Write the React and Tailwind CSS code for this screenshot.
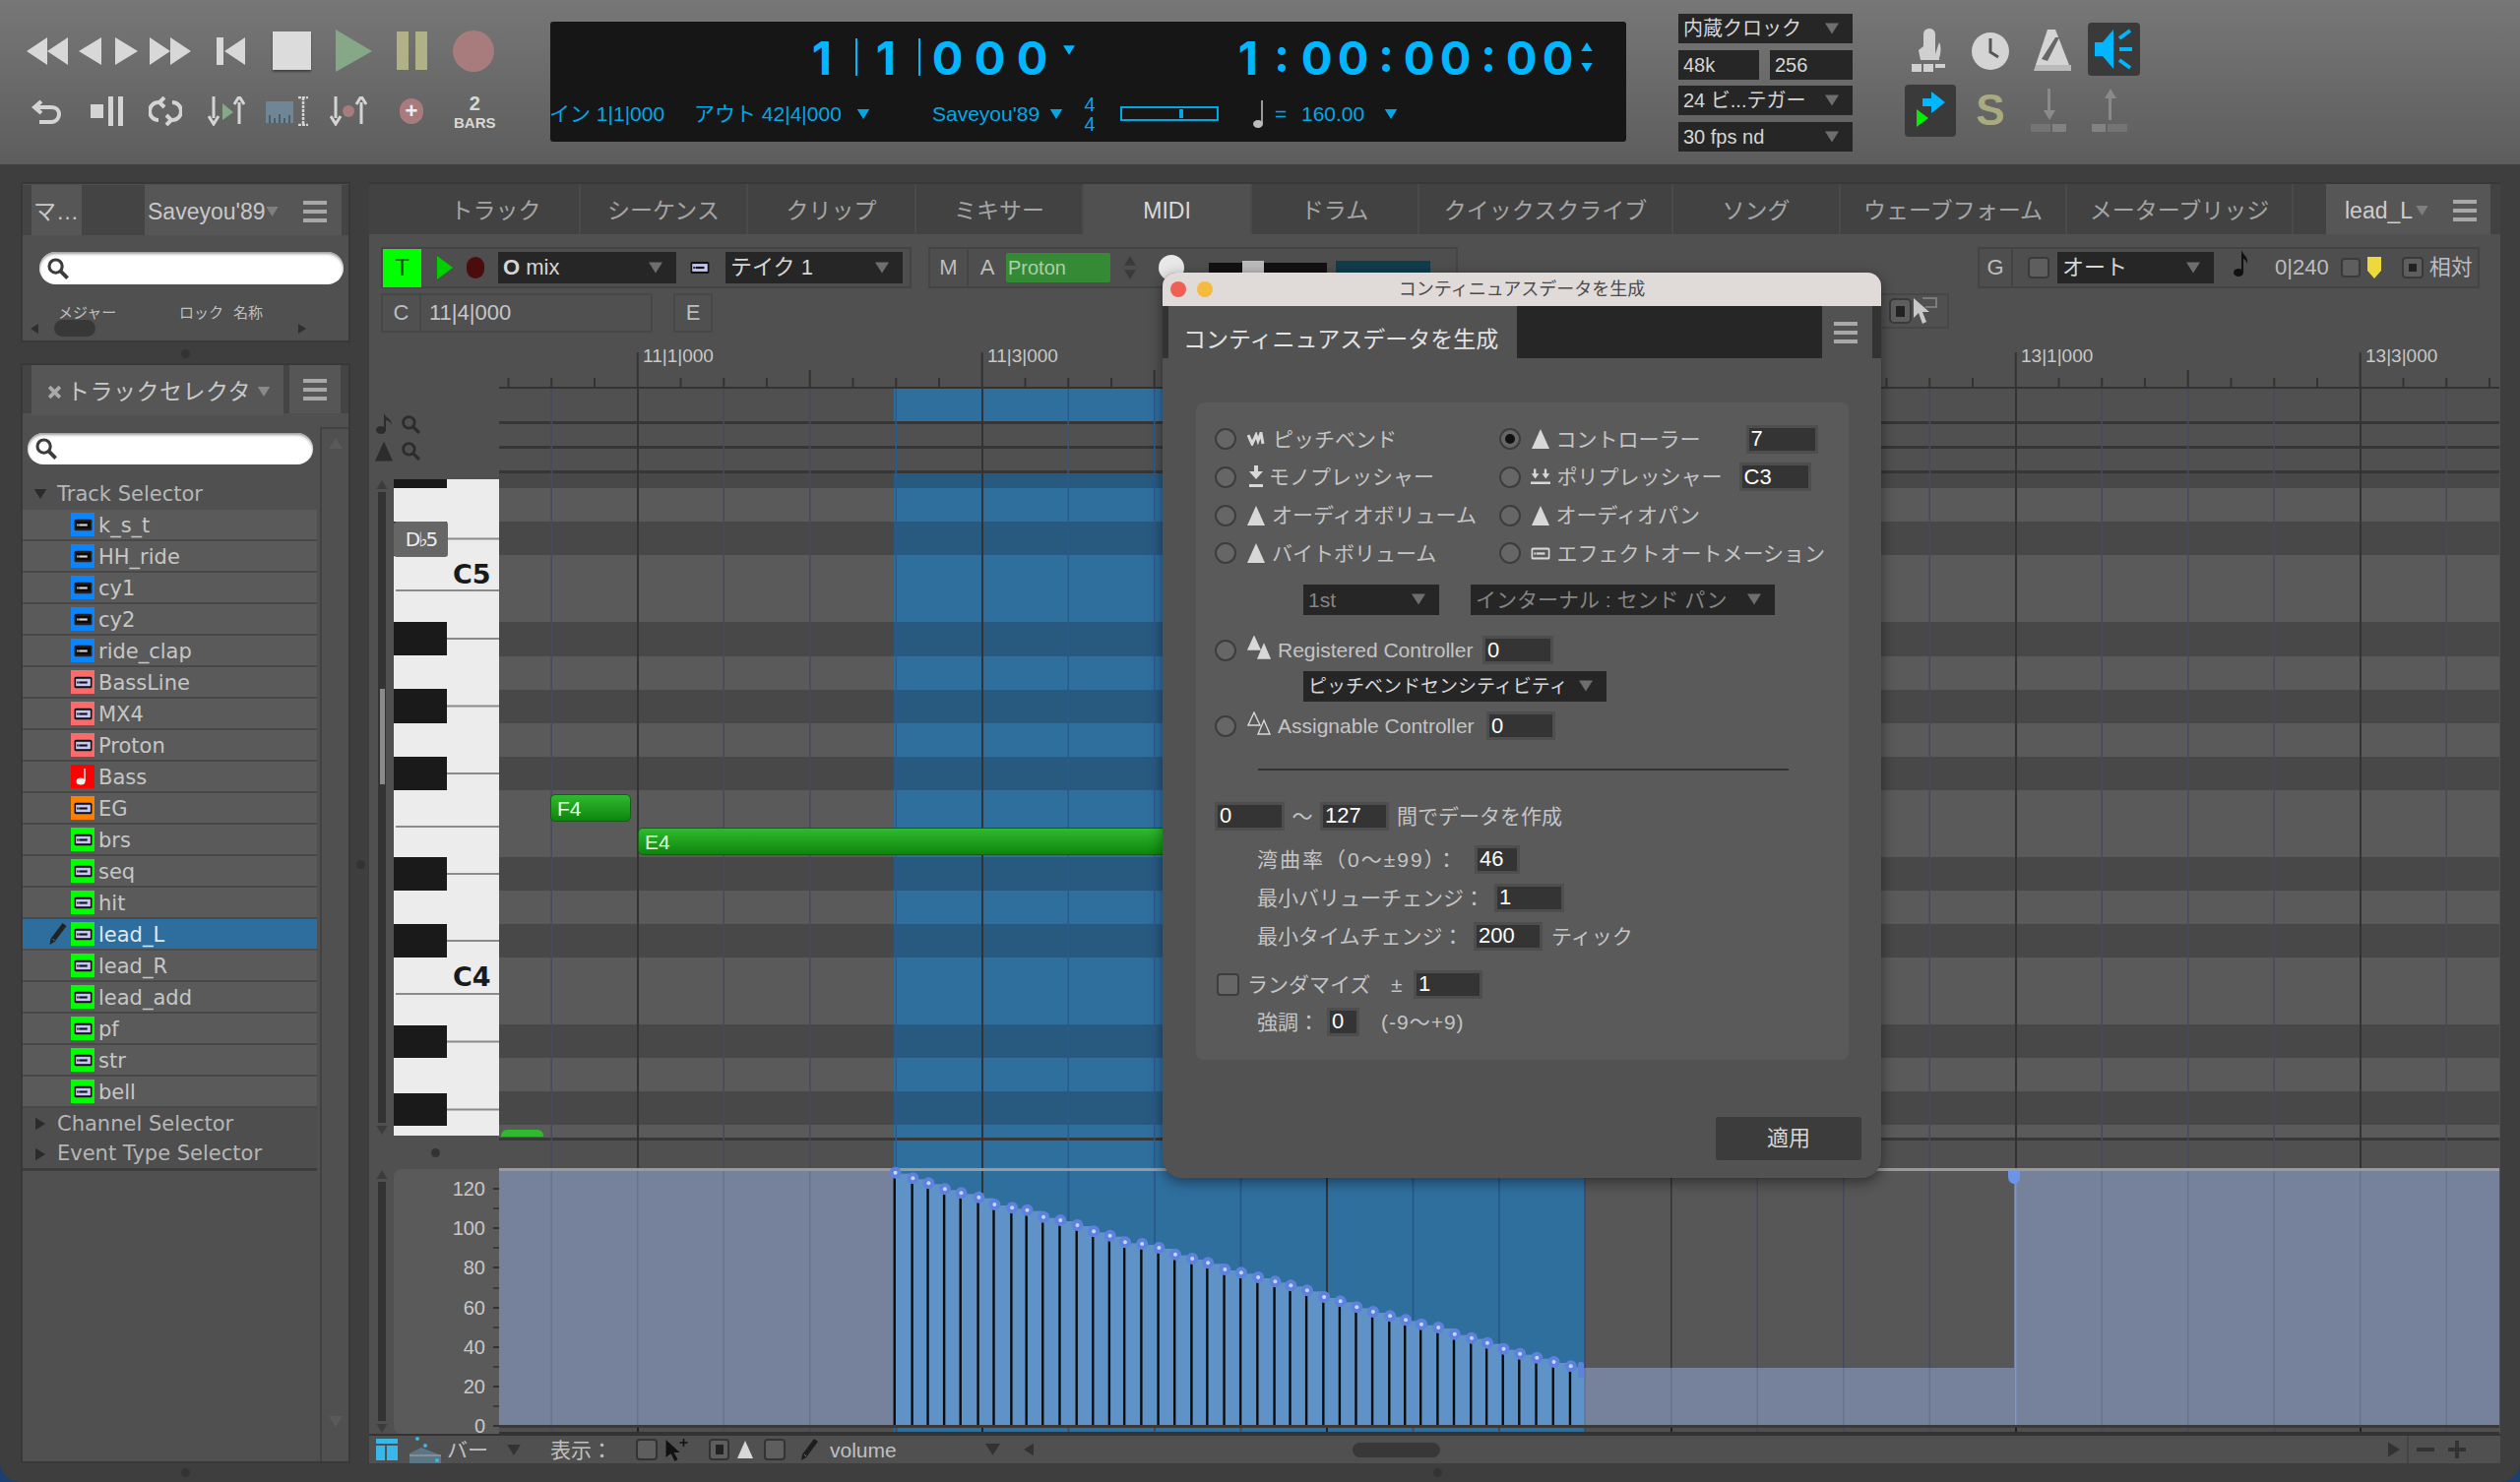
import React from "react";

const TRACKS = [
  { name: "k_s_t", color: "bg-[#0a84ff]", dark: true },
  { name: "HH_ride", color: "bg-[#0a84ff]", dark: true },
  { name: "cy1", color: "bg-[#0a84ff]", dark: true },
  { name: "cy2", color: "bg-[#0a84ff]", dark: true },
  { name: "ride_clap", color: "bg-[#0a84ff]", dark: true },
  { name: "BassLine", color: "bg-[#fb6b6b]" },
  { name: "MX4", color: "bg-[#fb6b6b]" },
  { name: "Proton", color: "bg-[#fb6b6b]" },
  { name: "Bass", color: "bg-[#ff0000]", note: true },
  { name: "EG", color: "bg-[#ff8000]" },
  { name: "brs", color: "bg-[#00ff00]" },
  { name: "seq", color: "bg-[#00ff00]" },
  { name: "hit", color: "bg-[#00ff00]" },
  { name: "lead_L", color: "bg-[#00ff00]", selected: true },
  { name: "lead_R", color: "bg-[#00ff00]" },
  { name: "lead_add", color: "bg-[#00ff00]" },
  { name: "pf", color: "bg-[#00ff00]" },
  { name: "str", color: "bg-[#00ff00]" },
  { name: "bell", color: "bg-[#00ff00]" },
];

const TABS = [
  { label: "トラック", w: "w-[171px]" },
  { label: "シーケンス", w: "w-[170px]" },
  { label: "クリップ", w: "w-[171px]" },
  { label: "ミキサー", w: "w-[170px]" },
  { label: "MIDI", w: "w-[171px]", active: true },
  { label: "ドラム", w: "w-[170px]" },
  { label: "クイックスクライブ", w: "w-[258px]" },
  { label: "ソング", w: "w-[170px]" },
  { label: "ウェーブフォーム", w: "w-[230px]" },
  { label: "メーターブリッジ", w: "w-[230px]" },
];

// head positions of the controller ramp, measured off the screenshot
const RAMP = [
  [327, 128], [355, 145], [380, 160], [406, 178], [432, 190], [460, 203], [485, 225],
  [513, 235], [537, 242], [563, 263], [590, 273], [617, 288], [643, 307], [669, 320],
  [693, 340], [720, 345], [747, 357], [773, 377], [800, 390], [825, 403], [852, 423],
  [878, 433], [905, 447], [932, 460], [957, 472], [983, 487], [1010, 507], [1036, 520],
  [1062, 538], [1088, 552], [1115, 565], [1140, 577], [1165, 590], [1192, 600], [1218, 620],
  [1245, 632], [1270, 647], [1296, 665], [1322, 680], [1349, 692], [1376, 705], [1403, 718],
].map(([u, v]) => [700 + u / 1.568, 1150 + v / 3]);

const DARK_LANES = [
  [481, 496], [530, 564], [632, 667], [701, 735], [769, 803],
  [871, 905], [939, 973], [1041, 1075], [1109, 1143],
];

const BLACK_KEYS = [
  [487, 496], [530, 565], [632, 666], [700, 735], [769, 803],
  [871, 905], [939, 973], [1042, 1075], [1111, 1144],
];

const beats = Array.from({ length: 23 }, (_, i) => 559.5 + i * 87.5);
const ticks = Array.from({ length: 47 }, (_, i) => 515.5 + i * 43.75);

const Tri = ({ className }) => (
  <svg viewBox="0 0 10 8" className={className}>
    <path d="M0 0h10L5 8z" fill="currentColor" />
  </svg>
);

const Menu = ({ className = "" }) => (
  <div className={`flex flex-col justify-between w-[24px] h-[22px] ${className}`}>
    <div className="h-[4px] bg-[#a8a8a8]" />
    <div className="h-[4px] bg-[#a8a8a8]" />
    <div className="h-[4px] bg-[#a8a8a8]" />
  </div>
);

const Search = ({ className, color = "#3c3c3c" }) => (
  <svg viewBox="0 0 20 20" className={className} fill="none" stroke={color}>
    <circle cx="8" cy="8" r="5.5" strokeWidth="2.6" />
    <path d="M12 12l6 6" strokeWidth="3.2" />
  </svg>
);

const SearchBox = ({ className }) => (
  <div className={`flex items-center bg-white rounded-full pl-[7px] shadow-[inset_0_2px_3px_#999] ${className}`}>
    <Search className="w-[24px] h-[24px]" />
  </div>
);

const Cassette = ({ className, body = "#c6c6f2", frame = "#111", slot = "#111" }) => (
  <svg viewBox="0 0 18 12" className={className}>
    <rect x="0.5" y="0.5" width="17" height="11" rx="1.5" fill={frame} />
    <rect x="2" y="2.5" width="14" height="7" fill={body} />
    <rect x="5" y="5" width="8" height="2" fill={slot} />
    <rect x="3" y="5" width="1.4" height="2" fill={slot} />
  </svg>
);

const Pencil = ({ className, color = "#222" }) => (
  <svg viewBox="0 0 20 24" className={className}>
    <path d="M14 1l4 3L6 20l-5 3 1-6z" fill={color} />
    <path d="M4 17l2 2" stroke="#777" strokeWidth="1" />
  </svg>
);

const TrackIcon = ({ track }) => (
  <div className={`flex items-center justify-center w-[24px] h-[24px] ${track.color}`}>
    {track.note ? (
      <svg viewBox="0 0 14 20" className="w-[14px] h-[20px]">
        <ellipse cx="5" cy="15" rx="4.5" ry="3.5" fill="#eee" />
        <path d="M9 15V2" stroke="#eee" strokeWidth="1.6" />
      </svg>
    ) : track.dark ? (
      <Cassette className="w-[19px] h-[13px]" body="#0b0b0b" frame="#222" slot="#d8d8d8" />
    ) : (
      <Cassette className="w-[19px] h-[13px]" />
    )}
  </div>
);

const TrackRow = ({ track }) => (
  <div className={`flex items-center h-[32px] border-b-2 pl-[23px] ${track.selected ? "bg-[#2e6e9e] border-[#4c4c4c] text-[#dfe9f0]" : "bg-[#5a5a5a] border-[#484848] text-[#c6c6c6]"}`}>
    <div className="w-[26px] flex justify-center">
      {track.selected && <Pencil className="w-[21px] h-[24px]" />}
    </div>
    <TrackIcon track={track} />
    <span className="ml-[4px] pt-[2px]">{track.name}</span>
  </div>
);

const GroupRow = ({ label, open, className = "" }) => (
  <div className={`flex items-center h-[32px] text-[#b6b6b6] ${className}`}>
    <div className="w-[35px] flex justify-center">
      {open ? (
        <Tri className="w-[14px] h-[10px] text-[#2b2b2b]" />
      ) : (
        <Tri className="w-[14px] h-[10px] -rotate-90 text-[#2b2b2b]" />
      )}
    </div>
    <span>{label}</span>
  </div>
);

const DarkSelect = ({ label, className = "", textClass = "text-[#d6d6d6]" }) => (
  <div className={`flex items-center justify-between bg-[#262626] pl-[5px] pr-[14px] ${textClass} ${className}`}>
    <span className="whitespace-nowrap">{label}</span>
    <Tri className="w-[14px] h-[12px] text-[#6e6e6e] shrink-0" />
  </div>
);

const Radio = ({ on }) => (
  <div className="flex items-center justify-center w-[22px] h-[22px] rounded-full bg-[#666] border-2 border-[#3d3d3d] shrink-0">
    {on && <div className="w-[10px] h-[10px] rounded-full bg-[#111]" />}
  </div>
);

const Field = ({ value, className = "" }) => (
  <div className={`flex items-center h-[23px] bg-[#343434] ring-[3px] ring-[#4e4e4e] pl-[2px] text-white text-[22px] leading-none ${className}`}>
    {value}
  </div>
);

const TriIcon = ({ className = "w-[18px] h-[20px]", fill = "#d8d8d8" }) => (
  <svg viewBox="0 0 18 20" className={className}>
    <path d="M9 0l9 20H0z" fill={fill} />
  </svg>
);

const TwoTri = ({ outline }) => (
  <svg viewBox="0 0 24 24" className="w-[24px] h-[24px] -mt-[6px]">
    <path d="M7 1l6 13H1z" fill={outline ? "none" : "#d8d8d8"} stroke="#d8d8d8" strokeWidth="1.4" />
    <path d="M17 9l6 14H11z" fill={outline ? "none" : "#d8d8d8"} stroke="#d8d8d8" strokeWidth="1.4" />
  </svg>
);

const Cell = ({ children, className = "" }) => (
  <div className={`flex items-center justify-center text-[#bdbdbd] ${className}`}>{children}</div>
);

const Dot = ({ className }) => <div className={`absolute w-[9px] h-[9px] rounded-full bg-[#333] ${className}`} />;

const BigDigit = ({ children, className = "w-[43px]" }) => (
  <span className={`text-center ${className}`}>{children}</span>
);

const Transport = () => (
  <div className="w-[532px] shrink-0 pt-[30px]">
    <div className="flex items-center h-[43px] text-[#d8d8d8]">
      <svg viewBox="0 0 42 28" className="w-[42px] h-[28px]">
        <path d="M21 0v28L0 14zM42 0v28L21 14z" fill="currentColor" />
      </svg>
      <svg viewBox="0 0 23 28" className="w-[23px] h-[28px] ml-[11px]">
        <path d="M23 0v28L0 14z" fill="currentColor" />
      </svg>
      <svg viewBox="0 0 23 28" className="w-[23px] h-[28px] ml-[14px]">
        <path d="M0 0v28l23-14z" fill="currentColor" />
      </svg>
      <svg viewBox="0 0 42 28" className="w-[42px] h-[28px] ml-[12px]">
        <path d="M0 0v28l21-14zM21 0v28l21-14z" fill="currentColor" />
      </svg>
      <svg viewBox="0 0 29 28" className="w-[29px] h-[28px] ml-[26px]">
        <path d="M0 0h7v28H0zM29 0v28L8 14z" fill="currentColor" />
      </svg>
      <div className="w-[39px] h-[39px] ml-[28px] bg-[#dcdcdc] shadow-[0_2px_2px_#444]" />
      <svg viewBox="0 0 37 43" className="w-[37px] h-[43px] ml-[25px]">
        <path d="M0 0v43l37-21z" fill="#86a886" />
      </svg>
      <div className="flex gap-[7px] ml-[25px]">
        <div className="w-[12px] h-[39px] bg-[#b1b187]" />
        <div className="w-[12px] h-[39px] bg-[#b1b187]" />
      </div>
      <div className="w-[42px] h-[42px] ml-[26px] rounded-full bg-[#a87c7c]" />
    </div>
    <div className="flex items-center h-[30px] mt-[25px] text-[#d4d4d4]">
      <svg viewBox="0 0 32 28" className="w-[32px] h-[28px] ml-[5px]" fill="none" stroke="currentColor" strokeWidth="4">
        <path d="M10 4L3 10l7 6M3 10h17c6 0 8 4 8 7s-2 8-8 8H8" />
      </svg>
      <div className="flex items-center gap-[5px] ml-[28px]">
        <div className="w-[13px] h-[14px] bg-[#d4d4d4]" />
        <div className="w-[5px] h-[30px] bg-[#d4d4d4]" />
        <div className="w-[5px] h-[30px] bg-[#d4d4d4]" />
      </div>
      <svg viewBox="0 0 34 30" className="w-[34px] h-[30px] ml-[26px]" fill="none" stroke="currentColor" strokeWidth="4">
        <path d="M13 6H10a8 8 0 000 18M21 24h3a8 8 0 000-18M16 1l-5 5 5 5M18 19l5 5-5 5" />
      </svg>
      <svg viewBox="0 0 38 30" className="w-[38px] h-[30px] ml-[26px]">
        <path d="M6 0v22M1 20l5 8 5-8M32 28V6M27 8l5-8 5 8" fill="none" stroke="currentColor" strokeWidth="3" />
        <path d="M15 7v17l11-8z" fill="#86a886" />
      </svg>
      <svg viewBox="0 0 45 30" className="w-[45px] h-[30px] ml-[21px]">
        <path d="M0 5h28v22H0z" fill="#6f8697" />
        <path d="M4 27v-8M9 27v-5M14 27v-9M19 27v-5M24 27v-8" stroke="#333" strokeWidth="1" />
        <path d="M33 1h10M33 29h10M38 1v28" stroke="currentColor" strokeWidth="2.5" strokeDasharray="3 1" />
      </svg>
      <svg viewBox="0 0 38 30" className="w-[38px] h-[30px] ml-[20px]">
        <path d="M6 0v22M1 20l5 8 5-8M32 28V6M27 8l5-8 5 8" fill="none" stroke="currentColor" strokeWidth="3" />
        <circle cx="19" cy="15" r="6" fill="#a87c7c" />
      </svg>
      <div className="flex items-center justify-center w-[24px] h-[26px] ml-[33px] rounded-full bg-[#a87c7c] text-[#eee] text-[22px] font-bold leading-none">+</div>
      <div className="flex flex-col items-center ml-[31px] text-[#d8d8d8] font-bold leading-none">
        <span className="text-[20px]">2</span>
        <span className="text-[15px] mt-[2px]">BARS</span>
      </div>
    </div>
  </div>
);

const Display = () => (
  <div className="w-[1093px] h-[122px] mt-[22px] bg-[#161616] rounded-[3px] shrink-0 text-[#00a8e6]">
    <div className="flex items-center h-[68px] pt-[4px] text-[#00b6ff] text-[47px] font-bold font-['Inter',sans-serif] leading-none">
      <BigDigit className="w-[38px] ml-[257px]">1</BigDigit>
      <div className="w-[2px] h-[38px] bg-[#00b6ff] ml-[15px]" />
      <BigDigit className="w-[38px] ml-[10px]">1</BigDigit>
      <div className="w-[2px] h-[38px] bg-[#00b6ff] ml-[14px]" />
      <BigDigit className="w-[43px] ml-[6px]">0</BigDigit>
      <BigDigit>0</BigDigit>
      <BigDigit>0</BigDigit>
      <Tri className="w-[12px] h-[10px] ml-[10px] -mt-[14px]" />
      <BigDigit className="w-[38px] ml-[157px]">1</BigDigit>
      <BigDigit className="w-[30px] -mt-[6px]">:</BigDigit>
      <BigDigit className="w-[37px] ml-[2px]">0</BigDigit>
      <BigDigit className="w-[37px]">0</BigDigit>
      <BigDigit className="w-[30px] -mt-[6px]">:</BigDigit>
      <BigDigit className="w-[37px]">0</BigDigit>
      <BigDigit className="w-[37px]">0</BigDigit>
      <BigDigit className="w-[30px] -mt-[6px]">:</BigDigit>
      <BigDigit className="w-[37px]">0</BigDigit>
      <BigDigit className="w-[37px]">0</BigDigit>
      <div className="flex flex-col gap-[12px] ml-[5px]">
        <Tri className="w-[12px] h-[9px] rotate-180" />
        <Tri className="w-[12px] h-[9px]" />
      </div>
    </div>
    <div className="flex items-center h-[54px] pb-[3px] text-[21px] leading-none whitespace-nowrap">
      <span className="w-[147px] -ml-[1px]">イン 1|1|000</span>
      <span className="w-[165px]">アウト 42|4|000</span>
      <Tri className="w-[14px] h-[10px]" />
      <span className="w-[119px] ml-[63px]">Saveyou'89</span>
      <Tri className="w-[14px] h-[10px]" />
      <div className="flex flex-col items-center w-[16px] ml-[19px] text-[20px] leading-[20px]">
        <span>4</span>
        <span>4</span>
      </div>
      <div className="relative w-[100px] h-[15px] ml-[23px] border-2 border-[#00a8e6]">
        <div className="absolute left-[58px] top-[1px] w-[4px] h-[9px] bg-[#00a8e6]" />
      </div>
      <svg viewBox="0 0 14 28" className="w-[14px] h-[28px] ml-[34px]">
        <ellipse cx="6" cy="24" rx="5" ry="4" fill="#bbb" />
        <path d="M10 24V0" stroke="#bbb" strokeWidth="1.6" />
      </svg>
      <span className="ml-[9px] w-[27px]">=</span>
      <span className="w-[70px]">160.00</span>
      <Tri className="w-[14px] h-[10px] ml-[14px]" />
    </div>
  </div>
);

const ClockSettings = () => (
  <div className="flex flex-col w-[177px] ml-[53px] mt-[14px] shrink-0 text-[20px] leading-none">
    <DarkSelect label="内蔵クロック" className="h-[30px]" />
    <div className="flex gap-[11px] mt-[7px] text-[#d6d6d6]">
      <div className="flex items-center w-[82px] h-[30px] bg-[#262626] pl-[5px]">48k</div>
      <div className="flex items-center w-[84px] h-[30px] bg-[#262626] pl-[5px]">256</div>
    </div>
    <DarkSelect label="24 ビ...テガー" className="h-[30px] mt-[6px]" />
    <DarkSelect label="30 fps nd" className="h-[30px] mt-[7px]" />
  </div>
);

const TopIcons = () => (
  <div className="flex flex-col w-[240px] ml-[53px] mt-[23px] shrink-0">
    <div className="flex items-start h-[54px]">
      <svg viewBox="0 0 40 44" className="w-[40px] h-[44px] mt-[6px] ml-[5px]" fill="#d0d0d0">
        <path d="M14 30V6c0-8 12-8 12 0v20l4-12c2 4 2 10 0 16z" />
        <path d="M14 18l-5 4 2 10h19v-2H14z" />
        <path d="M2 36h10v8H2zM14 36h10v8H14zM26 36h10v4H26z" />
      </svg>
      <svg viewBox="0 0 40 40" className="w-[42px] h-[40px] mt-[9px] ml-[21px]">
        <circle cx="20" cy="20" r="19" fill="#d4d4d4" />
        <path d="M20 7v14l8 5" fill="none" stroke="#555" strokeWidth="3" />
      </svg>
      <svg viewBox="0 0 42 42" className="w-[42px] h-[42px] mt-[7px] ml-[21px]">
        <path d="M16 0h8l14 36H4z" fill="#d4d4d4" />
        <path d="M4 36h36v6H2z" fill="#bbb" />
        <path d="M10 30L24 8h4L16 32z" fill="#666" />
      </svg>
      <div className="flex items-center justify-center w-[53px] h-[54px] ml-[15px] bg-[#3a3a3a] rounded-[4px]">
        <svg viewBox="0 0 40 42" className="w-[40px] h-[42px]">
          <path d="M0 14h8L19 1v40L8 28H0z" fill="#00b6ff" />
          <path d="M25 10l11-8M25 21h13M25 32l11 8" stroke="#00b6ff" strokeWidth="4" />
        </svg>
      </div>
    </div>
    <div className="flex items-center h-[54px] mt-[8px]">
      <div className="flex items-center justify-center w-[52px] h-[53px] bg-[#3a3a3a] rounded-[4px]">
        <svg viewBox="0 0 34 42" className="w-[34px] h-[42px]">
          <path d="M3 20v18l12-9z" fill="#00ee00" />
          <path d="M18 2l14 11-14 11v-7H9V9h9z" fill="#00b6ff" />
        </svg>
      </div>
      <span className="w-[40px] ml-[15px] text-center text-[44px] font-bold text-[#aaaa80] leading-none">S</span>
      <svg viewBox="0 0 40 44" className="w-[42px] h-[44px] ml-[18px]" fill="#8a8a8a">
        <path d="M19 0h3v22h5l-6 10-6-10h4z" />
        <path d="M2 36h20v8H2z" opacity="0.45" />
        <path d="M24 36h14v8H24z" opacity="0.8" />
      </svg>
      <svg viewBox="0 0 40 44" className="w-[42px] h-[44px] ml-[20px]" fill="#8a8a8a">
        <path d="M19 32h3V10h5L21 0l-6 10h4z" />
        <path d="M2 36h14v8H2z" opacity="0.8" />
        <path d="M18 36h20v8H18z" opacity="0.45" />
      </svg>
    </div>
  </div>
);

const PanelTab = ({ children, className = "" }) => (
  <div className={`flex items-center h-[51px] pt-[3px] text-[23px] text-[#c8c8c8] ${className}`}>{children}</div>
);

const Browser = () => (
  <div className="w-[335px] h-[163px] bg-[#505050] border-2 border-[#383838] pt-[1px] shrink-0">
    <div className="flex h-[51px] bg-[#444]">
      <PanelTab className="w-[51px] ml-[9px] bg-[#565656] pl-[2px]">マ…</PanelTab>
      <PanelTab className="w-[200px] ml-[64px] bg-[#565656]">
        <span className="ml-[3px] whitespace-nowrap">Saveyou'89</span>
        <Tri className="w-[13px] h-[10px] ml-[1px] text-[#7e7e7e]" />
        <Menu className="ml-[25px]" />
      </PanelTab>
    </div>
    <SearchBox className="w-[309px] h-[33px] ml-[17px] mt-[17px]" />
    <div className="flex mt-[21px] ml-[36px] text-[15px] leading-none text-[#c0c0c0]">
      <span className="w-[123px]">メジャー</span>
      <span className="w-[55px]">ロック</span>
      <span>名称</span>
    </div>
    <div className="flex items-center h-[17px] ml-[7px]">
      <Tri className="w-[10px] h-[12px] rotate-90 text-[#2f2f2f]" />
      <div className="w-[42px] h-[17px] ml-[15px] rounded-full bg-[#383838]" />
      <Tri className="w-[10px] h-[12px] -rotate-90 text-[#2f2f2f] ml-[205px]" />
    </div>
  </div>
);

const TrackSelector = () => (
  <div className="flex flex-col w-[335px] h-[1118px] mt-[21px] bg-[#505050] border-2 border-[#383838] shrink-0">
    <div className="flex h-[49px] bg-[#444] shrink-0">
      <PanelTab className="w-[256px] h-[49px] ml-[9px] bg-[#565656] pl-[16px]">
        <svg viewBox="0 0 14 14" className="w-[15px] h-[15px] mr-[5px] shrink-0">
          <path d="M2 2l10 10M12 2L2 12" stroke="#aaa" strokeWidth="3.4" />
        </svg>
        <span className="tracking-[0.5px]">トラックセレクタ</span>
        <Tri className="w-[14px] h-[10px] ml-[6px] text-[#8a8a8a]" />
      </PanelTab>
      <div className="flex items-center justify-center w-[52px] ml-[6px] bg-[#565656]">
        <Menu />
      </div>
    </div>
    <div className="flex flex-1 min-h-0 font-['DejaVu_Sans',sans-serif] text-[21px] leading-none">
      <div className="w-[299px] pt-[20px] shrink-0">
        <SearchBox className="w-[290px] h-[32px] ml-[5px] mb-[14px]" />
        <GroupRow label="Track Selector" open />
        {TRACKS.map((t) => (
          <TrackRow key={t.name} track={t} />
        ))}
        <GroupRow label="Channel Selector" className="bg-[#4e4e4e]" />
        <GroupRow label="Event Type Selector" className="bg-[#4e4e4e] border-b-[3px] border-[#3c3c3c]" />
      </div>
      <div className="flex flex-col items-center justify-between flex-1 ml-[3px] mt-[14px] pt-[9px] pb-[35px] border-l-2 border-t-2 border-[#424242]">
        <Tri className="w-[14px] h-[11px] rotate-180 text-[#5a5a5a]" />
        <Tri className="w-[14px] h-[11px] text-[#5a5a5a]" />
      </div>
    </div>
  </div>
);

const Piano = () => (
  <svg viewBox="400 487 107 667" className="w-[107px] h-[667px]">
    <rect x="400" y="487" width="107" height="667" fill="#ececec" />
    {BLACK_KEYS.map(([a, b]) => (
      <g key={a}>
        <rect x="400" y={a} width="54" height={b - a} fill="#1a1a1a" />
        {a > 487 && <rect x="454" y={(a + b) / 2 - 1} width="53" height="2" fill="#8a8a8a" />}
      </g>
    ))}
    {[599, 839, 1009].map((y) => (
      <rect key={y} x="402" y={y} width="105" height="2" fill="#8a8a8a" />
    ))}
  </svg>
);

const VScroll = ({ className, thumb }) => (
  <div className={`relative flex flex-col items-center w-[25px] shrink-0 ${className}`}>
    <Tri className="w-[12px] h-[9px] rotate-180 text-[#3c3c3c] mt-[1px]" />
    <div className="relative flex-1 w-[8px] my-[3px] bg-[#333]">
      {thumb && <div className="absolute left-[2px] top-[200px] w-[5px] h-[97px] bg-[#8a8a8a]" />}
    </div>
    <Tri className="w-[12px] h-[9px] text-[#3c3c3c] mb-[1px]" />
  </div>
);

const Gutter = () => (
  <div className="flex flex-col w-[132px] shrink-0">
    <div className="h-[147px] pt-[79px]">
      <div className="flex items-center h-[24px] pl-[6px] gap-[8px]">
        <svg viewBox="0 0 18 22" className="w-[18px] h-[22px]" fill="#2c2c2c">
          <ellipse cx="6" cy="17" rx="5" ry="4" />
          <path d="M9 17V0c2 5 8 5 8 12-1-3-4-5-6-5v10z" />
        </svg>
        <Search className="w-[21px] h-[21px]" color="#2c2c2c" />
      </div>
      <div className="flex items-center h-[24px] pl-[6px] gap-[8px] mt-[3px]">
        <TriIcon className="w-[18px] h-[21px]" fill="#2c2c2c" />
        <Search className="w-[21px] h-[21px]" color="#2c2c2c" />
      </div>
    </div>
    <div className="flex h-[667px]">
      <VScroll className="h-[667px]" thumb />
      <div className="relative">
        <Piano />
        <div className="absolute left-[0px] top-[43px] flex items-center justify-center w-[55px] h-[36px] rounded-[3px] bg-[#666] text-[#eee] text-[20px] leading-none tracking-[-2px] font-['DejaVu_Sans',sans-serif]">
          D♭5
        </div>
        <span className="absolute left-[60px] top-[83px] text-[27px] font-bold text-[#1a1a1a] leading-none font-['DejaVu_Sans',sans-serif]">C5</span>
        <span className="absolute left-[60px] top-[492px] text-[27px] font-bold text-[#1a1a1a] leading-none font-['DejaVu_Sans',sans-serif]">C4</span>
      </div>
    </div>
    <div className="flex items-center justify-end h-[34px] pr-[60px]">
      <div className="w-[9px] h-[9px] rounded-full bg-[#333]" />
    </div>
    <div className="flex h-[269px]">
      <VScroll className="h-[269px]" />
      <div className="flex-1 bg-[#5a5a5a] rounded-tl-[8px] rounded-bl-[8px] text-[20px] leading-none text-[#c8c8c8]">
        {["120", "100", "80", "60", "40", "20", "0"].map((n) => (
          <div key={n} className="relative flex items-center justify-end h-[40.2px]">
            <span>{n}</span>
            <div className="w-[6px] h-[2px] bg-[#333] ml-[8px]" />
            {n !== "0" && <div className="absolute right-0 -bottom-[1px] w-[6px] h-[2px] bg-[#3c3c3c]" />}
          </div>
        ))}
      </div>
    </div>
  </div>
);

const Grid = () => (
  <svg viewBox="507 340 2032 1117" className="block w-[2032px] h-[1117px]">
    {/* ruler */}
    {ticks.map((x, i) => {
      const n = i % 8;
      const top = n === 3 ? 358 : n === 7 ? 376 : 384;
      return <rect key={x} x={x} y={top} width="2" height={393 - top} fill="#333" />;
    })}
    <rect x="507" y="393" width="2032" height="2" fill="#333" />

    {/* marker lanes */}
    <rect x="908" y="395" width="700" height="33" fill="#2f6f9e" />
    <rect x="507" y="428" width="2032" height="3" fill="#363636" />
    <rect x="507" y="453" width="2032" height="3" fill="#363636" />
    <rect x="507" y="478" width="2032" height="3" fill="#363636" />

    {/* note lanes */}
    <rect x="507" y="481" width="2032" height="676" fill="#5a5a5a" />
    <rect x="908" y="481" width="700" height="676" fill="#2f6f9e" />
    {DARK_LANES.map(([a, b]) => (
      <g key={a}>
        <rect x="507" y={a} width="2032" height={b - a} fill="#484848" />
        <rect x="908" y={a} width="700" height={b - a} fill="#285a80" />
      </g>
    ))}
    <rect x="507" y="1156" width="2032" height="3" fill="#383838" />
    <rect x="908" y="1159" width="700" height="29" fill="#2f6f9e" />

    {/* beat lines */}
    {beats.map((x, i) =>
      i % 4 === 1 ? (
        <rect key={x} x={x} y="395" width="2" height="793" fill="#333" />
      ) : (
        <rect key={x} x={x} y="395" width="1.5" height="793" fill={x > 908 && x < 1608 ? "#2a5a8c" : "#47495f"} />
      )
    )}

    {/* controller lane */}
    <rect x="507" y="1188" width="2032" height="260" fill="#76829c" />
    <rect x="908" y="1188" width="701" height="260" fill="#2f6f9e" />
    <rect x="1609" y="1188" width="437" height="202" fill="#575757" />
    {beats.map((x, i) => {
      const inRamp = x > 908 && x < 1609;
      const inGray = x >= 1609 && x < 2046;
      return (
        <g key={x}>
          {inRamp && <rect x={x} y="1188" width="2" height="260" fill={i % 4 === 1 ? "#333" : "#2a5a8c"} />}
          {inGray && <rect x={x} y="1188" width="1.5" height="202" fill={i % 4 === 1 ? "#333" : "#47495f"} />}
          {!inRamp && <rect x={x} y={inGray ? 1390 : 1188} width="1.5" height={inGray ? 58 : 260} fill={x === 2047 ? "#7f95c9" : "#68748f"} />}
        </g>
      );
    })}
    {RAMP.map(([x, y], i) => (
      <rect key={x} x={x} y={y} width={i < RAMP.length - 1 ? RAMP[i + 1][0] - x + 0.5 : 1609 - x} height={1448 - y} fill="#5f93c8" />
    ))}
    <rect x="1590" y="1391" width="19" height="57" fill="#5f93c8" />
    <rect x="507" y="1187" width="2032" height="3" fill="#9a9a9a" />
    {RAMP.map(([x, y]) => (
      <g key={x}>
        <rect x={x - 1} y={y} width="2.4" height={1448 - y} fill="#0c0c0c" />
        <circle cx={x + 1} cy={y - 1} r="6" fill="#5c82de" />
        <circle cx={x + 1} cy={y - 1} r="2" fill="#c6d6fa" />
      </g>
    ))}
    <path d="M1603 1385a6 7 0 016 0v14a6 7 0 01-6 0z" fill="#5c82de" />
    <path d="M2040 1190h12v6a6 7 0 01-12 0z" fill="#6c94e8" />
    <rect x="507" y="1448" width="2032" height="3" fill="#3a3a3a" />
    <rect x="507" y="1451" width="2032" height="5" fill="#505050" />
    <rect x="908" y="1451" width="701" height="5" fill="#2f6f9e" />
    {beats.map((x, i) => (
      <rect key={x} x={x} y="1451" width="2" height="5" fill={i % 4 === 1 ? "#222" : "#47495f"} />
    ))}
    <rect x="507" y="1455" width="2032" height="2" fill="#333" />
  </svg>
);

const Note = ({ label, className }) => (
  <div className={`absolute flex items-center pl-[6px] rounded-[5px] border border-[#155c15] bg-gradient-to-b from-[#2fb92f] to-[#0c860c] text-[#e6ffe0] text-[21px] leading-none ${className}`}>
    {label}
  </div>
);

const Canvas = () => (
  <div className="relative w-[2032px] h-[1117px] shrink-0">
    <Grid />
    {[
      ["11|1|000", "left-[146px]"],
      ["11|3|000", "left-[496px]"],
      ["13|1|000", "left-[1546px]"],
      ["13|3|000", "left-[1896px]"],
    ].map(([t, pos]) => (
      <span key={t} className={`absolute top-[12px] text-[19px] leading-none text-[#c8c8c8] ${pos}`}>{t}</span>
    ))}
    <Note label="F4" className="left-[52px] top-[467px] w-[82px] h-[28px]" />
    <Note label="E4" className="left-[141px] top-[501px] w-[540px] h-[28px]" />
    <div className="absolute left-[2px] top-[808px] w-[43px] h-[7px] rounded-t-[6px] bg-[#2fb92f]" />
  </div>
);

const Toolbars = () => (
  <>
    <div className="flex items-stretch h-[42px] mt-[13px] ml-[12px] text-[22px] leading-none">
      <div className="flex items-center w-[539px] border-2 border-[#444] bg-[#4e4e4e]">
        <div className="flex items-center justify-center w-[39px] h-[39px] bg-[#00ff00] text-[#1c4d1c] text-[24px]">T</div>
        <svg viewBox="0 0 16 24" className="w-[16px] h-[24px] ml-[16px]">
          <path d="M0 0v24l16-12z" fill="#00d000" />
        </svg>
        <div className="w-[18px] h-[22px] ml-[14px] rounded-full bg-[#4a0c0c]" />
        <DarkSelect label={<span><b>O</b> mix</span>} className="w-[181px] h-[32px] ml-[14px]" />
        <Cassette className="w-[20px] h-[14px] ml-[14px] shrink-0" />
        <DarkSelect label="テイク 1" className="w-[180px] h-[32px] ml-[16px]" />
      </div>
      <div className="flex items-center w-[538px] ml-[17px] border-2 border-[#444] bg-[#4e4e4e]">
        <Cell className="w-[39px] h-full border-r-2 border-[#444]">M</Cell>
        <Cell className="w-[38px]">A</Cell>
        <div className="flex items-center w-[106px] h-[30px] bg-[#358a35] text-[#a9d0a9] text-[20px] pl-[2px] rounded-[2px]">Proton</div>
        <div className="flex flex-col gap-[4px] ml-[14px] text-[#3a3a3a]">
          <Tri className="w-[12px] h-[10px] rotate-180" />
          <Tri className="w-[12px] h-[10px]" />
        </div>
        <div className="w-[26px] h-[26px] ml-[23px] rounded-full bg-[#e8e8e8]" />
        <div className="relative w-[120px] h-[11px] ml-[25px] bg-[#111]">
          <div className="absolute left-[34px] -top-[2px] w-[22px] h-[15px] bg-[#bbb]" />
        </div>
        <div className="w-[96px] h-[14px] ml-[9px] bg-[#103c4c]" />
      </div>
      <div className="flex items-center w-[510px] ml-[528px] border-2 border-[#444] bg-[#4e4e4e]">
        <Cell className="w-[34px] h-full border-r-2 border-[#444]">G</Cell>
        <div className="w-[22px] h-[22px] ml-[15px] rounded-[4px] bg-[#5e5e5e] border-2 border-[#3a3a3a]" />
        <DarkSelect label="オート" className="w-[159px] h-[32px] ml-[8px]" />
        <svg viewBox="0 0 16 28" className="w-[16px] h-[28px] ml-[19px] -mt-[8px]" fill="#111">
          <ellipse cx="6" cy="23" rx="5" ry="4" />
          <path d="M9 23V0c2 6 7 6 6 14-1-3-3-5-4-5v14z" />
        </svg>
        <span className="ml-[27px] text-[#bdbdbd]">0|240</span>
        <div className="w-[20px] h-[20px] ml-[12px] rounded-[4px] bg-[#5e5e5e] border-2 border-[#3a3a3a]" />
        <svg viewBox="0 0 14 22" className="w-[14px] h-[22px] ml-[7px]">
          <path d="M0 0h14v14l-7 8-7-8z" fill="#ecd93c" />
        </svg>
        <div className="flex items-center justify-center w-[22px] h-[22px] ml-[21px] rounded-[4px] border-2 border-[#3a3a3a] bg-[#5e5e5e]">
          <div className="w-[8px] h-[8px] bg-[#222]" />
        </div>
        <span className="ml-[6px] text-[#bdbdbd] whitespace-nowrap">相対</span>
      </div>
    </div>
    <div className="flex items-stretch h-[40px] mt-[5px] ml-[12px] text-[22px] leading-none">
      <div className="flex w-[276px] border-2 border-[#474747]">
        <Cell className="w-[39px] border-r-2 border-[#474747]">C</Cell>
        <div className="flex items-center pl-[8px] text-[#c6c6c6]">11|4|000</div>
      </div>
      <Cell className="w-[40px] ml-[21px] border-2 border-[#474747]">E</Cell>
      <div className="flex items-center justify-end w-[100px] h-[36px] ml-[1156px] border-2 border-[#474747] pr-[10px] gap-[2px]">
        <div className="flex items-center justify-center w-[23px] h-[26px] rounded-[5px] border-2 border-[#3a3a3a] bg-[#5e5e5e]">
          <div className="w-[9px] h-[11px] bg-[#222]" />
        </div>
        <svg viewBox="0 0 24 30" className="w-[24px] h-[30px]">
          <path d="M9 2h14v9H12" fill="none" stroke="#888" strokeWidth="1.6" />
          <path d="M0 2v20l5-5 4 11 4-2-4-10h7z" fill="#c8c8c8" />
        </svg>
      </div>
    </div>
  </>
);

const BottomBar = () => (
  <div className="flex items-center h-[30px] border-t-2 border-[#333] text-[20px] leading-none text-[#c0c0c0]">
    <svg viewBox="0 0 22 22" className="w-[22px] h-[22px] ml-[7px]" fill="#37b8e8">
      <path d="M0 0h22v5H0zM0 7h9v15H0zM11 7h11v15H11z" />
    </svg>
    <svg viewBox="0 0 33 28" className="w-[33px] h-[28px] ml-[12px]">
      <path d="M0 18l12-6 20 8v8H0z" fill="#5d7686" />
      <circle cx="8" cy="3" r="2" fill="#37b8e8" />
      <circle cx="16" cy="10" r="2" fill="#37b8e8" />
      <circle cx="28" cy="25" r="2" fill="#37b8e8" />
      <path d="M0 20h32" stroke="#aaa" strokeWidth="1" />
    </svg>
    <span className="ml-[5px] text-[21px]">バー</span>
    <Tri className="w-[14px] h-[11px] ml-[19px] text-[#333]" />
    <span className="ml-[30px] text-[21px] w-[56px] whitespace-nowrap">表示：</span>
    <div className="w-[22px] h-[22px] ml-[31px] rounded-[4px] bg-[#5e5e5e] border-2 border-[#333]" />
    <svg viewBox="0 0 24 24" className="w-[25px] h-[24px] ml-[8px]">
      <path d="M0 2v18l5-4 4 8 3-2-4-7h6z" fill="#111" />
      <path d="M18 1v8M14 5h8" stroke="#111" strokeWidth="1.6" />
    </svg>
    <div className="flex items-center justify-center w-[21px] h-[22px] ml-[19px] rounded-[4px] bg-[#5e5e5e] border-2 border-[#333]">
      <div className="w-[8px] h-[10px] bg-[#222]" />
    </div>
    <TriIcon className="w-[16px] h-[20px] ml-[8px]" />
    <div className="w-[22px] h-[22px] ml-[11px] rounded-[4px] bg-[#5e5e5e] border-2 border-[#333]" />
    <Pencil className="w-[20px] h-[24px] ml-[15px]" color="#1e1e1e" />
    <span className="ml-[10px] w-[68px] text-[21px]">volume</span>
    <Tri className="w-[15px] h-[12px] ml-[90px] text-[#333]" />
    <Tri className="w-[14px] h-[10px] ml-[22px] rotate-90 text-[#333]" />
    <div className="w-[89px] h-[15px] ml-[322px] rounded-full bg-[#383838]" />
    <Tri className="w-[18px] h-[12px] ml-[960px] -rotate-90 text-[#333]" />
    <div className="w-[2px] h-full ml-[4px] bg-[#444]" />
    <div className="w-[18px] h-[4px] ml-[8px] bg-[#333]" />
    <div className="relative w-[18px] h-[18px] ml-[14px]">
      <div className="absolute left-0 top-[7px] w-[18px] h-[4px] bg-[#333]" />
      <div className="absolute left-[7px] top-0 w-[4px] h-[18px] bg-[#333]" />
    </div>
  </div>
);

const Editor = () => (
  <div className="flex flex-col w-[2165px] h-[1302px] bg-[#505050] border-t-2 border-[#383838] shrink-0">
    <div className="flex h-[51px] bg-[#424242] shrink-0 text-[23px] leading-none">
      <div className="w-[44px]" />
      {TABS.map((t) => (
        <div
          key={t.label}
          className={`flex items-center justify-center pt-[4px] border-r-2 border-[#4a4a4a] ${t.w} ${t.active ? "bg-[#505050] text-[#dadada]" : "text-[#a4a4a4]"}`}
        >
          {t.label}
        </div>
      ))}
      <div className="w-[33px]" />
      <div className="flex items-center w-[167px] pt-[3px] bg-[#565656] text-[#cdcdcd] pl-[19px]">
        lead_L
        <Tri className="w-[13px] h-[10px] ml-[3px] text-[#7e7e7e]" />
        <Menu className="ml-[25px]" />
      </div>
    </div>
    <Toolbars />
    <div className="flex mt-[2px] shrink-0">
      <Gutter />
      <Canvas />
    </div>
    <BottomBar />
  </div>
);

const OptionRow = ({ left, right }) => (
  <div className="grid grid-cols-[288.5px_1fr] h-[38.67px] items-center">
    {left}
    {right}
  </div>
);

const Option = ({ on, icon, label, textClass = "ml-[6px]", children }) => (
  <div className="flex items-center">
    <Radio on={on} />
    <div className="flex justify-center w-[20px] ml-[10px]">{icon}</div>
    <span className={`whitespace-nowrap ${textClass}`}>{label}</span>
    {children}
  </div>
);

const Dialog = () => (
  <div className="absolute left-[1181px] top-[277px] w-[730px] h-[920px] rounded-t-[14px] rounded-b-[20px] bg-[#525252] shadow-[0_4px_14px_rgba(0,0,0,0.45)] overflow-hidden text-[21px] leading-none text-[#c4c4c4]">
    <div className="relative flex items-center justify-center h-[34px] bg-[#e0dbd9] text-[18px] text-[#4a4a4a]">
      <div className="absolute left-[8px] top-[9px] w-[16px] h-[16px] rounded-full bg-[#ee5f56]" />
      <div className="absolute left-[35px] top-[9px] w-[16px] h-[16px] rounded-full bg-[#f4bb3f]" />
      コンティニュアスデータを生成
    </div>
    <div className="flex items-center h-[53px] border-l-[6px] border-r-[9px] border-[#333]">
      <span className="w-[354px] pl-[15px] pt-[16px] text-[23px] text-[#e2e2e2] whitespace-nowrap">コンティニュアスデータを生成</span>
      <div className="w-[310px] h-full bg-[#262626]" />
      <Menu className="ml-[12px]" />
    </div>
    <div className="w-[663px] h-[668px] ml-[34px] mt-[45px] pt-[18px] pl-[19px] rounded-[8px] bg-[#5a5a5a]">
      <OptionRow
        left={
          <Option
            icon={
              <svg viewBox="0 0 18 14" className="w-[18px] h-[14px]" fill="none" stroke="#d8d8d8" strokeWidth="3">
                <path d="M1 3l4 9 4-9 2 6 3-8 2 11" />
              </svg>
            }
            label="ピッチベンド"
            textClass="ml-[7px]"
          />
        }
        right={
          <Option on icon={<TriIcon />} label="コントローラー" textClass="ml-[6px] w-[196px]">
            <Field value="7" className="w-[67px]" />
          </Option>
        }
      />
      <OptionRow
        left={
          <Option
            icon={
              <svg viewBox="0 0 14 24" className="w-[14px] h-[24px]">
                <path d="M5 0h4v6h5l-7 8-7-8h5zM0 19h14v3H0z" fill="#d8d8d8" />
              </svg>
            }
            label="モノプレッシャー"
            textClass="ml-[3px]"
          />
        }
        right={
          <Option
            icon={
              <svg viewBox="0 0 26 24" className="w-[26px] h-[24px]">
                <path d="M4 1h3v6h4l-5 7-5-7h3zM18 1h3v6h4l-5 7-5-7h3zM0 18h26v3H0z" fill="#d8d8d8" />
              </svg>
            }
            label="ポリプレッシャー"
            textClass="ml-[7px] w-[188px]"
          >
            <Field value="C3" className="w-[67px]" />
          </Option>
        }
      />
      <OptionRow
        left={<Option icon={<TriIcon />} label="オーディオボリューム" />}
        right={<Option icon={<TriIcon />} label="オーディオパン" />}
      />
      <OptionRow
        left={<Option icon={<TriIcon />} label="バイトボリューム" />}
        right={
          <Option
            icon={<Cassette className="w-[20px] h-[15px]" body="#5a5a5a" frame="#d8d8d8" slot="#d8d8d8" />}
            label="エフェクトオートメーション"
            textClass="ml-[7px]"
          />
        }
      />
      <div className="flex mt-[12px] ml-[90px] gap-[32px]">
        <DarkSelect label="1st" textClass="text-[#858585]" className="w-[138px] h-[31px]" />
        <DarkSelect label="インターナル : センド パン" textClass="text-[#858585]" className="w-[309px] h-[31px]" />
      </div>
      <div className="flex items-center h-[24px] mt-[24px]">
        <Radio />
        <div className="ml-[11px]"><TwoTri /></div>
        <span className="ml-[7px] w-[211px] whitespace-nowrap">Registered Controller</span>
        <Field value="0" className="w-[66px]" />
      </div>
      <DarkSelect label="ピッチベンドセンシティビティ" className="w-[308px] h-[31px] mt-[9px] ml-[90px] text-[19px]" />
      <div className="flex items-center h-[22px] mt-[14px]">
        <Radio />
        <div className="ml-[11px]"><TwoTri outline /></div>
        <span className="ml-[7px] w-[215px] whitespace-nowrap">Assignable Controller</span>
        <Field value="0" className="w-[64px]" />
      </div>
      <div className="w-[539px] h-[2px] ml-[44px] mt-[32px] bg-[#333]" />
      <div className="flex items-center h-[23px] mt-[35px] ml-[3px]">
        <Field value="0" className="w-[65px]" />
        <span className="w-[42px] text-center">～</span>
        <Field value="127" className="w-[64px]" />
        <span className="ml-[11px]">間でデータを作成</span>
      </div>
      <div className="flex items-center h-[23px] mt-[21px] ml-[43px]">
        <span className="w-[224px] whitespace-nowrap tracking-[2px]">湾曲率（0～±99）：</span>
        <Field value="46" className="w-[40px]" />
      </div>
      <div className="flex items-center h-[23px] mt-[16px] ml-[43px]">
        <span className="w-[244px] whitespace-nowrap">最小バリューチェンジ：</span>
        <Field value="1" className="w-[65px]" />
      </div>
      <div className="flex items-center h-[23px] mt-[16px] ml-[43px]">
        <span className="w-[223px] whitespace-nowrap">最小タイムチェンジ：</span>
        <Field value="200" className="w-[64px]" />
        <span className="ml-[12px]">ティック</span>
      </div>
      <div className="flex items-center h-[23px] mt-[26px] ml-[2px]">
        <div className="w-[23px] h-[23px] rounded-[4px] bg-[#666] border-2 border-[#3d3d3d]" />
        <span className="ml-[8px] w-[146px]">ランダマイズ</span>
        <span className="w-[26px]">±</span>
        <Field value="1" className="w-[64px]" />
      </div>
      <div className="flex items-center h-[23px] mt-[15px] ml-[43px]">
        <span className="w-[74px] whitespace-nowrap">強調：</span>
        <Field value="0" className="w-[27px]" />
        <span className="ml-[25px] whitespace-nowrap tracking-[1px]">(-9～+9)</span>
      </div>
    </div>
    <div className="flex items-center justify-center w-[148px] h-[44px] ml-[562px] mt-[58px] rounded-[3px] bg-[#3c3c3c] text-[#d8d8d8] text-[22px]">適用</div>
  </div>
);

export default function App() {
  return (
    <div className="relative flex flex-col w-[2560px] h-[1506px] overflow-hidden bg-[#1d3f70] font-['Liberation_Sans','Noto_Sans_CJK_JP',sans-serif]">
      <div className="flex h-[167px] pl-[27px] bg-gradient-to-b from-[#777] to-[#5d5d5d] shrink-0">
        <Transport />
        <Display />
        <ClockSettings />
        <TopIcons />
      </div>
      <div className="flex flex-1 gap-[19px] px-[21px] pt-[18px] rounded-b-[20px] bg-[#3e3e3e]">
        <div className="flex flex-col w-[335px] shrink-0">
          <Browser />
          <TrackSelector />
        </div>
        <Editor />
      </div>
      <Dialog />
      <Dot className="left-[184px] top-[355px]" />
      <Dot className="left-[362px] top-[874px]" />
      <Dot className="left-[184px] top-[1492px]" />
      <Dot className="left-[1456px] top-[1492px]" />
    </div>
  );
}
